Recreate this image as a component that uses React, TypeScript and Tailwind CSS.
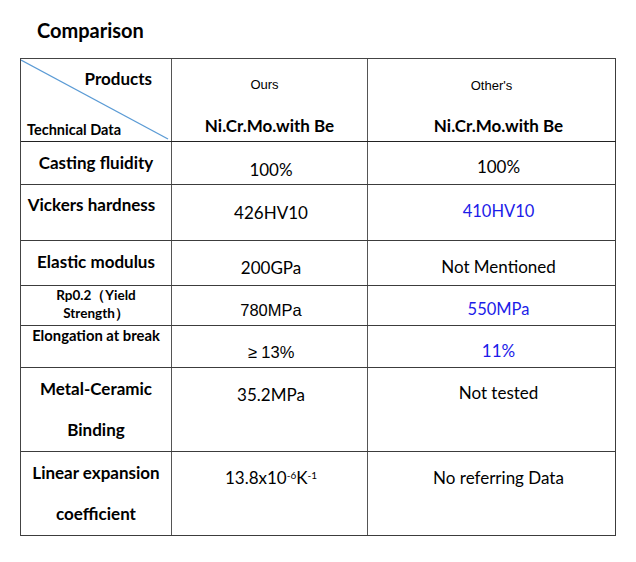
import React from "react";

const cal = "font-['Lato','Open_Sans',sans-serif]";
const ari = "font-['Liberation_Sans',Arial,sans-serif]";
const blue = "text-[#1c1ce8]";

function Row({
  h,
  label,
  labelPt,
  labelClass,
  v1,
  v1Pt,
  v1Class,
  v2,
  v2Pt,
  v2Class,
}: {
  h: string;
  label: React.ReactNode;
  labelPt: string;
  labelClass: string;
  v1: React.ReactNode;
  v1Pt: string;
  v1Class: string;
  v2: React.ReactNode;
  v2Pt: string;
  v2Class: string;
}) {
  return (
    <div className={`grid grid-cols-[151px_196px_248px] border-b border-[#3c3c3c] ${h}`}>
      <div className={`border-r border-[#555] text-center font-bold text-black whitespace-nowrap ${cal} ${labelPt} ${labelClass}`}>{label}</div>
      <div className={`border-r border-[#555] pl-[3px] text-center text-black whitespace-nowrap ${v1Pt} ${v1Class}`}>{v1}</div>
      <div className={`border-r border-[#3c3c3c] pl-[14px] text-center whitespace-nowrap ${v2Pt} ${v2Class}`}>{v2}</div>
    </div>
  );
}

export default function App() {
  return (
    <div className="w-[636px] h-[562px] bg-white text-black">
      <div className={`h-[58px] pl-[37px] pt-[19px] text-[20px] leading-[22px] font-bold ${cal}`}>Comparison</div>
      <div className="ml-[20px] w-[596px] border-l border-t border-[#444]">
        <div className="grid grid-cols-[151px_196px_248px] h-[83px] border-b border-[#222]">
          <div className={`relative border-r border-[#555] ${cal} font-bold`}>
            <svg className="absolute inset-0" width="150" height="82" viewBox="0 0 150 82">
              <line x1="0" y1="1" x2="147" y2="80" stroke="#5b9bd5" strokeWidth="1.3" />
            </svg>
            <div className="relative pt-[10px] pr-[19px] text-right text-[17px] leading-[20px]">Products</div>
            <div className="relative mt-[33px] pl-[6px] text-[14.5px] leading-[16px] whitespace-nowrap">Technical Data</div>
          </div>
          <div className="border-r border-[#555] text-center">
            <div className={`pt-[18px] text-[13px] leading-[16px] pr-[10px] ${ari}`}>Ours</div>
            <div className={`mt-[23px] text-[17px] leading-[20px] font-bold ${cal}`}>Ni.Cr.Mo.with Be</div>
          </div>
          <div className="border-r border-[#3c3c3c] text-center">
            <div className={`pt-[19px] text-[13px] leading-[16px] ${ari}`}>Other's</div>
            <div className={`mt-[22px] pl-[14px] text-[17px] leading-[20px] font-bold ${cal}`}>Ni.Cr.Mo.with Be</div>
          </div>
        </div>
        <Row
          h="h-[43px]"
          label="Casting fluidity"
          labelPt="pt-[11px]"
          labelClass="text-[17px] leading-[20px]"
          v1="100%"
          v1Pt="pt-[18px]"
          v1Class={`text-[17px] leading-[20px] ${cal}`}
          v2="100%"
          v2Pt="pt-[15px]"
          v2Class={`text-[17px] leading-[20px] text-black ${cal}`}
        />
        <Row
          h="h-[56px]"
          label={<span className="pr-[9px]">Vickers hardness</span>}
          labelPt="pt-[10px]"
          labelClass="text-[17px] leading-[20px]"
          v1="426HV10"
          v1Pt="pt-[18px]"
          v1Class={`text-[17px] leading-[20px] ${cal}`}
          v2="410HV10"
          v2Pt="pt-[16px]"
          v2Class={`text-[16.5px] leading-[20px] ${blue} ${cal}`}
        />
        <Row
          h="h-[45px]"
          label="Elastic modulus"
          labelPt="pt-[11px]"
          labelClass="text-[17px] leading-[20px]"
          v1="200GPa"
          v1Pt="pt-[17px]"
          v1Class={`text-[17px] leading-[20px] ${cal}`}
          v2="Not Mentioned"
          v2Pt="pt-[16px]"
          v2Class={`text-[17px] leading-[20px] text-black ${cal}`}
        />
        <Row
          h="h-[40px]"
          label={
            <>
              <div>Rp0.2（Yield</div>
              <div>Strength）</div>
            </>
          }
          labelPt="pt-0"
          labelClass="text-[13.5px] leading-[18px]"
          v1="780MPa"
          v1Pt="pt-[14px]"
          v1Class={`text-[16.5px] leading-[20px] ${ari}`}
          v2="550MPa"
          v2Pt="pt-[13px]"
          v2Class={`text-[16.5px] leading-[20px] ${blue} ${cal}`}
        />
        <Row
          h="h-[42px]"
          label="Elongation at break"
          labelPt="pt-0"
          labelClass="text-[14.8px] leading-[18px]"
          v1="≥ 13%"
          v1Pt="pt-[16px]"
          v1Class={`text-[16.5px] leading-[20px] ${ari}`}
          v2="11%"
          v2Pt="pt-[15px]"
          v2Class={`text-[17px] leading-[20px] ${blue} ${cal}`}
        />
        <Row
          h="h-[84px]"
          label={
            <>
              <div>Metal-Ceramic</div>
              <div>Binding</div>
            </>
          }
          labelPt="pt-0"
          labelClass="text-[17px] leading-[41px]"
          v1="35.2MPa"
          v1Pt="pt-[17px]"
          v1Class={`text-[17px] leading-[20px] ${cal}`}
          v2="Not tested"
          v2Pt="pt-[15px]"
          v2Class={`text-[17px] leading-[20px] text-black ${cal}`}
        />
        <Row
          h="h-[84px]"
          label={
            <>
              <div>Linear expansion</div>
              <div>coefficient</div>
            </>
          }
          labelPt="pt-0"
          labelClass="text-[17px] leading-[41px]"
          v1={
            <>
              13.8x10<sup className="text-[10px]">-6</sup>K<sup className="text-[10px]">-1</sup>
            </>
          }
          v1Pt="pt-[16px]"
          v1Class={`text-[17px] leading-[20px] ${cal}`}
          v2="No referring Data"
          v2Pt="pt-[16px]"
          v2Class={`text-[17px] leading-[20px] text-black ${cal}`}
        />
      </div>
    </div>
  );
}
